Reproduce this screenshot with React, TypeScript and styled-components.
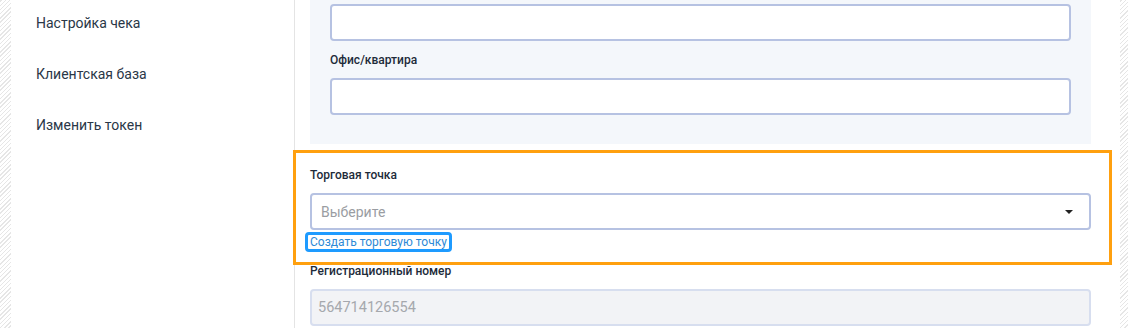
import React from 'react';
import styled, { createGlobalStyle } from 'styled-components';

const GlobalStyle = createGlobalStyle`
  html, body {
    margin: 0;
    height: 100%;
    overflow: hidden;
  }
  body {
    font-family: Roboto, "Noto Sans", sans-serif;
    background: repeating-linear-gradient(
      -45deg,
      #ffffff 0px,
      #ffffff 2px,
      #e6e6e6 2px,
      #e6e6e6 3px
    );
  }
`;

const Page = styled.div`
  display: flex;
  margin: 0 8px 0 11px;
  height: 328px;
  background: #fff;
`;

const Sidebar = styled.nav`
  width: 284px;
  flex-shrink: 0;
  border-right: 1px solid #e4e4e4;
  padding: 13px 0 0 25px;
  box-sizing: border-box;
  display: flex;
  flex-direction: column;
  gap: 31px;
`;

const NavItem = styled.a`
  font-size: 14px;
  line-height: 20px;
  color: #2a3747;
  text-decoration: none;
`;

const Main = styled.main`
  flex: 1;
  padding: 0 29px 0 15px;
  display: flex;
  flex-direction: column;
`;

const AddressPanel = styled.div`
  background: #f4f7fb;
  padding: 4px 20px 29px;
  display: flex;
  flex-direction: column;
`;

const Label = styled.label<{ $top?: number }>`
  display: block;
  font-size: 12px;
  font-weight: 500;
  line-height: 16px;
  color: #1d2b3a;
  margin-top: ${p => p.$top ?? 0}px;
  margin-bottom: 10px;
`;

const TextInput = styled.div<{ $disabled?: boolean }>`
  box-sizing: border-box;
  height: 37px;
  border: 2px solid ${p => (p.$disabled ? '#d7deef' : '#b6c2e2')};
  border-radius: 4px;
  background: ${p => (p.$disabled ? '#f2f3f6' : '#fff')};
  display: flex;
  align-items: center;
  padding: 0 6px;
  font-size: 14.5px;
  color: #a5a8ad;
`;

const Group = styled.div`
  margin: 9px -18px 0 -14px;
  padding: 14px 18px 12px 14px;
  outline: 3px solid #ffa00f;
  display: flex;
  flex-direction: column;
  align-items: stretch;
`;

const Select = styled.div`
  box-sizing: border-box;
  height: 37px;
  border: 2px solid #b6c2e2;
  border-radius: 4px;
  background: #fff;
  display: flex;
  align-items: center;
  justify-content: space-between;
  padding: 0 16px 0 9px;
  font-size: 14px;
  color: #9a9da2;
`;

const Caret = styled.span`
  width: 0;
  height: 0;
  border-left: 4px solid transparent;
  border-right: 4px solid transparent;
  border-top: 4px solid #222;
`;

const CreateLink = styled.a`
  align-self: flex-start;
  margin: 4px 0 0 -3px;
  padding: 1px 3px;
  font-size: 12px;
  line-height: 14px;
  color: #2e8ad6;
  text-decoration: none;
  outline: 3px solid #1e9bff;
  outline-offset: -1px;
  border-radius: 2px;
`;

export default function App() {
  return (
    <>
      <GlobalStyle />
      <Page>
        <Sidebar>
          <NavItem>Настройка чека</NavItem>
          <NavItem>Клиентская база</NavItem>
          <NavItem>Изменить токен</NavItem>
        </Sidebar>
        <Main>
          <AddressPanel>
            <TextInput />
            <Label $top={11}>Офис/квартира</Label>
            <TextInput />
          </AddressPanel>
          <Group>
            <Label>Торговая точка</Label>
            <Select>
              <span>Выберите</span>
              <Caret />
            </Select>
            <CreateLink href="#">Создать торговую точку</CreateLink>
          </Group>
          <Label $top={1}>Регистрационный номер</Label>
          <TextInput $disabled>564714126554</TextInput>
        </Main>
      </Page>
    </>
  );
}
